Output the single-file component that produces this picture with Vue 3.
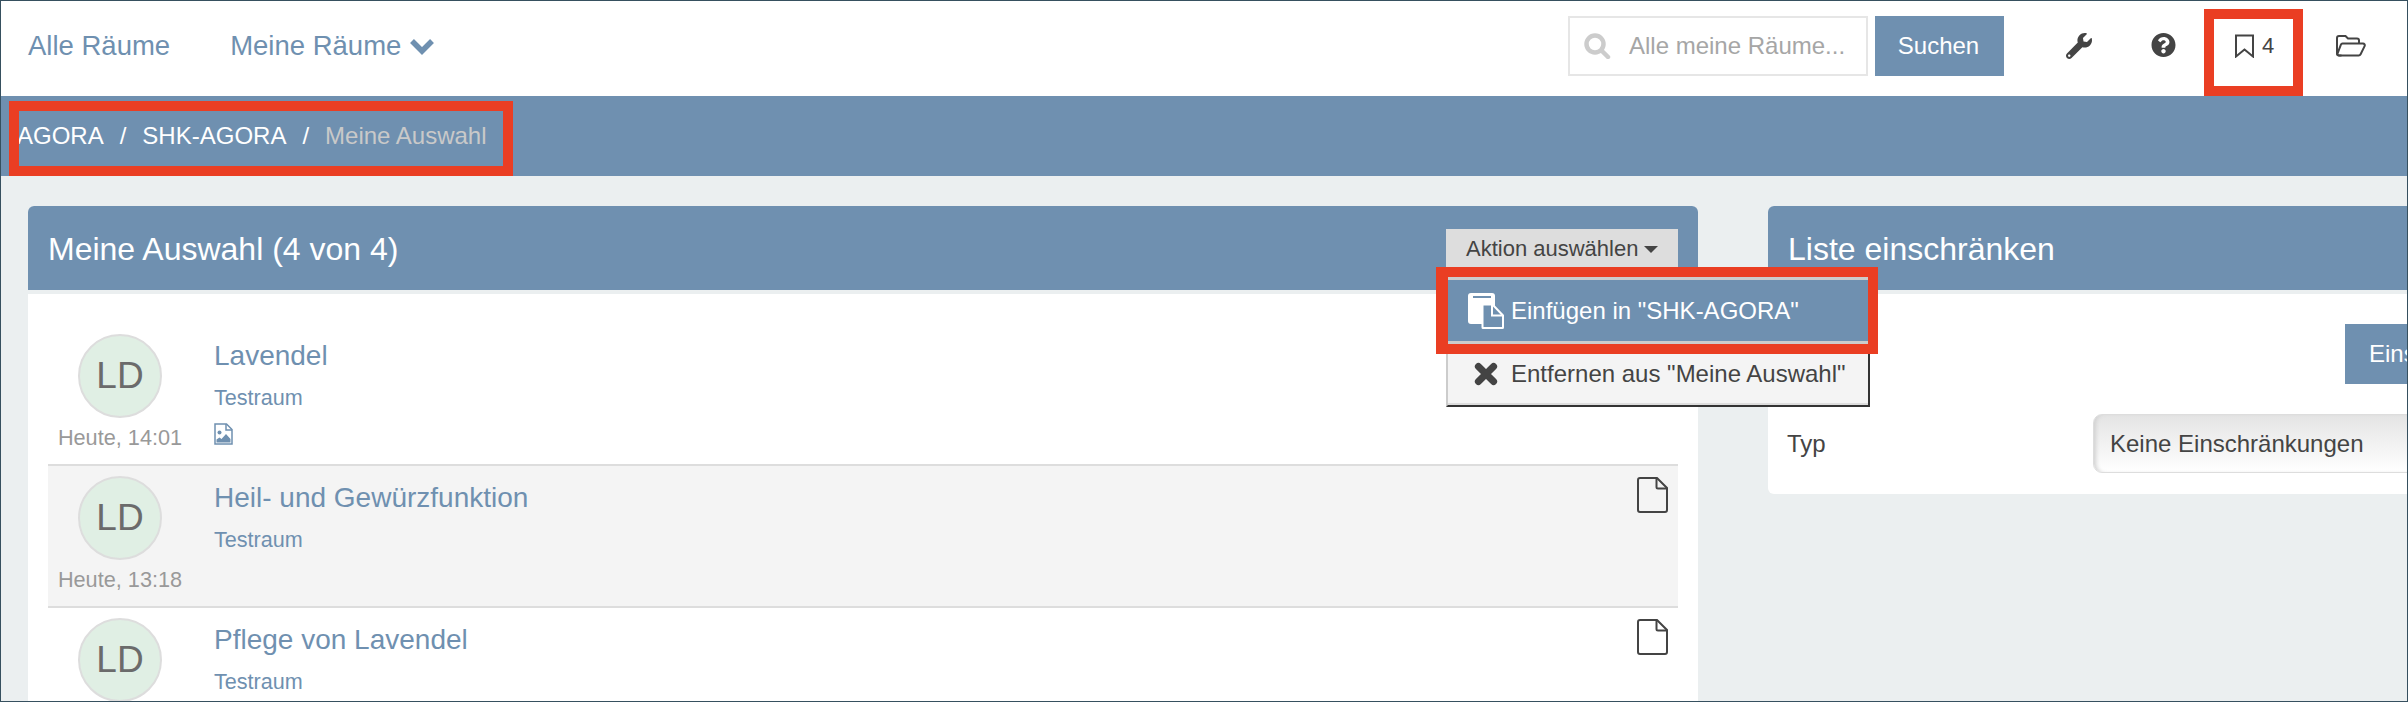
<template>
  <div class="page">
    <!-- Kopfzeile -->
    <header class="topbar">
      <nav class="main-nav">
        <a class="nav-link">Alle Räume</a>
        <a class="nav-link nav-drop">
          Meine Räume
          <svg class="chevron" viewBox="0 0 28 18"><polyline points="4,4 14,14 24,4" /></svg>
        </a>
      </nav>
      <div class="tools">
        <label class="search">
          <svg class="search-icon" viewBox="0 0 27 26">
            <circle cx="11" cy="11" r="8.500" />
            <line x1="17.500" y1="17.500" x2="24" y2="24" />
          </svg>
          <input type="text" placeholder="Alle meine Räume...">
        </label>
        <button class="search-btn">Suchen</button>
        <div class="tool tool-wrench">
          <svg class="wrench" viewBox="0 0 512 512"><path d="M507.73 109.1c-2.24-9.03-13.54-12.09-20.12-5.51l-74.36 74.36-67.88-11.31-11.31-67.88 74.36-74.36c6.62-6.62 3.43-17.9-5.66-20.16-47.38-11.74-99.55.91-136.58 37.93-39.64 39.64-50.55 97.1-34.05 147.2L18.74 402.76c-24.99 24.99-24.99 65.51 0 90.5 24.99 24.99 65.51 24.99 90.5 0l213.21-213.21c50.12 16.71 107.47 5.68 147.37-34.22 37.07-37.07 49.7-89.32 37.91-136.73zM64 472c-13.25 0-24-10.75-24-24 0-13.26 10.75-24 24-24s24 10.74 24 24c0 13.25-10.75 24-24 24z" /></svg>
        </div>
        <div class="tool tool-help">
          <svg class="help" viewBox="8 8 496 496"><path d="M504 256c0 136.997-111.043 248-248 248S8 392.997 8 256C8 119.083 119.043 8 256 8s248 111.083 248 248zM262.655 90c-54.497 0-89.255 22.957-116.549 63.758-3.536 5.286-2.353 12.415 2.715 16.258l34.699 26.31c5.205 3.947 12.621 3.008 16.665-2.122 17.864-22.658 30.113-35.797 57.303-35.797 20.429 0 45.698 13.148 45.698 32.958 0 14.976-12.363 22.667-32.534 33.976C247.128 238.528 216 254.941 216 296v4c0 6.627 5.373 12 12 12h56c6.627 0 12-5.373 12-12v-1.333c0-28.462 83.186-29.647 83.186-106.667 0-58.002-60.165-102-116.531-102zM256 338c-25.365 0-46 20.635-46 46 0 25.364 20.635 46 46 46s46-20.636 46-46c0-25.365-20.635-46-46-46z" /></svg>
        </div>
        <div class="tool tool-mark">
          <svg class="bookmark" viewBox="0 0 21 24"><path d="M2 1.500h17v21l-8.500-7-8.500 7z" /></svg>
          <span class="mark-count">4</span>
        </div>
        <div class="tool tool-folder">
          <svg class="folder" viewBox="0 0 30 22">
            <path d="M5.500 20.500H3a2 2 0 0 1-2-2V3a2 2 0 0 1 2-2h6.500l2.500 2.500h9a2 2 0 0 1 2 2V8.500" />
            <path d="M6.500 8.500h20.500a1.800 1.800 0 0 1 1.600 2.600l-4 8.200a2.200 2.200 0 0 1-2 1.200H3a1.500 1.500 0 0 1-1.400-2.200l3.300-8.700a1.800 1.800 0 0 1 1.600-1.100z" />
          </svg>
        </div>
      </div>
    </header>

    <!-- Pfad -->
    <div class="crumbs">
      <a>AGORA</a>
      <span>/</span>
      <a>SHK-AGORA</a>
      <span>/</span>
      <span class="crumb-current">Meine Auswahl</span>
    </div>

    <main class="content">
      <section class="card card-list">
        <div class="card-head">
          <h2>Meine Auswahl (4 von 4)</h2>
          <div class="action-wrap">
            <button class="action-btn">Aktion auswählen <i class="caret"></i></button>
            <div class="action-menu">
              <div class="menu-item active">
                <span class="menu-icon">
                  <svg class="paste" viewBox="0 0 36 36">
                    <path class="paste-back" d="M3 0h21a3 3 0 0 1 3 3v28H3a3 3 0 0 1-3-3V3a3 3 0 0 1 3-3z" />
                    <rect class="paste-notch" x="5" y="3" width="18" height="2" />
                    <path class="paste-sheet" d="M15 11.500h9.500l10.500 11v12a.500.500 0 0 1-.500.500H15a.500.500 0 0 1-.500-.500V12a.500.500 0 0 1 .500-.500z" />
                    <path class="paste-fold" d="M24 12v10.500h10.500" />
                  </svg>
                </span>
                Einfügen in "SHK-AGORA"
              </div>
              <div class="menu-item">
                <span class="menu-icon">
                  <svg class="times" viewBox="0 0 24 24"><path d="M5 5l14 14M19 5L5 19" /></svg>
                </span>
                Entfernen aus "Meine Auswahl"
              </div>
            </div>
          </div>
        </div>
        <div class="card-body list-body">
          <article v-for="(entry, index) in entries" :key="index" class="entry" :class="{ striped: index === 1 }">
            <div class="entry-left">
              <div class="avatar">LD</div>
              <div v-if="entry.time" class="entry-time">{{ entry.time }}</div>
            </div>
            <div class="entry-main">
              <a class="entry-title">{{ entry.title }}</a>
              <a class="entry-room">Testraum</a>
              <svg v-if="entry.image" class="file-image" viewBox="0 0 19 22">
                <path class="fi-line" d="M1 1h11.500l5.500 5.500V21H1z" />
                <path class="fi-line" d="M12 1v6h6" />
                <circle cx="5.500" cy="9.500" r="2" />
                <path d="M2.500 19.500v-3l3-2 2 1.500 4.500-5 4.500 5v3.500z" />
              </svg>
            </div>
            <svg class="file-icon" viewBox="0 0 31 36">
              <path d="M3 1h17l10 10v22a2 2 0 0 1-2 2H3a2 2 0 0 1-2-2V3a2 2 0 0 1 2-2z" />
              <path d="M19.500 1v9a1.500 1.500 0 0 0 1.500 1.500h9" />
            </svg>
          </article>
        </div>
      </section>

      <section class="card card-filter">
        <div class="card-head">
          <h2>Liste einschränken</h2>
        </div>
        <div class="card-body filter-body">
          <div class="filter-action">
            <button class="apply-btn">Einschränken</button>
          </div>
          <div class="filter-row">
            <span class="filter-label">Typ</span>
            <div class="filter-select">Keine Einschränkungen</div>
          </div>
        </div>
      </section>
    </main>

    <!-- rote Markierungen im Screenshot -->
    <div class="mark mark-crumbs"></div>
    <div class="mark mark-bookmark"></div>
    <div class="mark mark-menu"></div>
  </div>
</template>

<script setup>
const entries = [
  { title: 'Lavendel', time: 'Heute, 14:01', image: true },
  { title: 'Heil- und Gewürzfunktion', time: 'Heute, 13:18', image: false },
  { title: 'Pflege von Lavendel', time: '', image: false }
]
</script>

<style>
html,
body {
  margin: 0;
  overflow: hidden;
}
</style>

<style scoped>
.page {
  position: relative;
  box-sizing: border-box;
  width: 2408px;
  height: 702px;
  overflow: hidden;
  border: 1px solid #36505f;
  background-color: #ebeff0;
  font-family: "Liberation Sans", Arial, sans-serif;
  font-size: 24px;
  color: #444;
}

.topbar {
  display: flex;
  justify-content: space-between;
  box-sizing: border-box;
  height: 95px;
  padding: 15px 0 0 27px;
  background-color: #fff;
}

.main-nav {
  display: flex;
  gap: 60px;
  height: 60px;
  align-items: center;
}

.nav-link {
  display: flex;
  align-items: center;
  gap: 7px;
  font-size: 27.500px;
  color: #6f90b0;
}

.chevron {
  width: 28px;
  height: 18px;
  fill: none;
  stroke: #6f90b0;
  stroke-width: 5.500px;
}

.tools {
  display: flex;
  height: 60px;
  padding-right: 8px;
}

.search {
  display: flex;
  align-items: center;
  box-sizing: border-box;
  width: 300px;
  height: 60px;
  padding-left: 14px;
  border: 2px solid #e6e6e6;
}

.search-icon {
  flex: none;
  width: 27px;
  height: 26px;
  fill: none;
  stroke: #ccc;
  stroke-width: 4.500px;
  stroke-linecap: round;
}

.search input {
  flex: 1;
  min-width: 0;
  margin-left: 18px;
  padding: 0;
  border: none;
  outline: none;
  background: none;
  font-family: inherit;
  font-size: 24px;
  color: #444;
}

.search input::placeholder {
  color: #a6a6a6;
  opacity: 1;
}

.search-btn {
  width: 129px;
  height: 60px;
  margin-left: 7px;
  padding: 0 2px 0 0;
  border: none;
  background-color: #6f90b0;
  font-family: inherit;
  font-size: 24px;
  color: #fff;
}

.tool {
  display: flex;
  align-items: center;
  justify-content: center;
  height: 60px;
  fill: #444;
}

.tool-wrench {
  width: 84px;
  margin-left: 33px;
}

.wrench {
  width: 28px;
  height: 26px;
}

.tool-help {
  width: 84px;
}

.help {
  width: 25px;
  height: 24px;
  margin-top: -3px;
}

.tool-mark {
  width: 98px;
  gap: 7px;
}

.bookmark {
  width: 21px;
  height: 24px;
  fill: none;
  stroke: #444;
  stroke-width: 2px;
}

.mark-count {
  font-size: 22px;
}

.tool-folder {
  width: 96px;
}

.folder {
  width: 30px;
  height: 22px;
  fill: none;
  stroke: #444;
  stroke-width: 2px;
}

.crumbs {
  display: flex;
  align-items: center;
  gap: 16px;
  box-sizing: border-box;
  height: 80px;
  padding-left: 16px;
  background-color: #6f90b0;
  color: #fff;
}

.crumb-current {
  color: #c9c9c9;
}

.content {
  display: flex;
  align-items: flex-start;
  gap: 70px;
  padding: 30px 0 0 27px;
}

.card {
  flex: none;
  border-radius: 6px;
  background-color: #fff;
}

.card-list {
  width: 1670px;
  height: 600px;
}

.card-filter {
  width: 700px;
  height: 288px;
}

.card-head {
  display: flex;
  align-items: flex-start;
  justify-content: space-between;
  box-sizing: border-box;
  height: 88px;
  padding: 23px 20px 0 20px;
  border-bottom: 4px solid #ebeff0;
  border-radius: 6px 6px 0 0;
  background-color: #6f90b0;
}

.card-head h2 {
  margin: -1px 0 0;
  font-size: 32px;
  font-weight: 400;
  line-height: 42px;
  color: #fff;
}

.action-wrap {
  position: relative;
}

.action-btn {
  display: flex;
  align-items: center;
  gap: 6px;
  box-sizing: border-box;
  width: 232px;
  height: 60px;
  padding: 0 0 20px 20px;
  border: none;
  background-color: #ddd;
  font-family: inherit;
  font-size: 22px;
  color: #444;
}

.caret {
  width: 0;
  height: 0;
  border-top: 7px solid #444;
  border-left: 7px solid transparent;
  border-right: 7px solid transparent;
}

.action-menu {
  position: absolute;
  top: 48px;
  left: 0;
  z-index: 5;
  box-sizing: border-box;
  width: 424px;
  background-color: #f4f4f4;
  border-left: 2px solid #ccc;
  border-right: 2px solid #333;
  border-bottom: 2px solid #333;
}

.menu-item {
  display: flex;
  align-items: center;
  box-sizing: border-box;
  height: 61px;
  border-bottom: 2px solid #ddd;
  color: #444;
}

.menu-item.active {
  height: 67px;
  border-top: 3px solid #ccc;
  border-bottom: 3px solid #ccc;
  background-color: #6f90b0;
  color: #fff;
}

.menu-icon {
  display: flex;
  justify-content: center;
  width: 36px;
  margin: 0 7px 0 20px;
}

.paste {
  width: 36px;
  height: 36px;
}

.paste-back {
  fill: #fff;
}

.paste-notch {
  fill: #6f90b0;
}

.paste-sheet {
  fill: #6f90b0;
  stroke: #fff;
  stroke-width: 2px;
}

.paste-fold {
  fill: none;
  stroke: #fff;
  stroke-width: 2px;
}

.times {
  width: 26px;
  height: 26px;
  fill: none;
  stroke: #444;
  stroke-width: 6.500px;
  stroke-linecap: round;
}

.list-body {
  padding: 30px 20px 0;
}

.entry {
  display: flex;
  box-sizing: border-box;
  height: 142px;
  border-bottom: 2px solid #ddd;
}

.entry.striped {
  background-color: #f4f4f4;
}

.entry-left {
  display: flex;
  flex: none;
  flex-direction: column;
  align-items: center;
  width: 144px;
  padding-top: 10px;
}

.avatar {
  display: flex;
  align-items: center;
  justify-content: center;
  box-sizing: border-box;
  flex: none;
  width: 84px;
  height: 84px;
  border: 2px solid #ddd;
  border-radius: 50%;
  background-color: #e0efe4;
  font-size: 37px;
  color: #6b6b6b;
}

.entry-time {
  margin-top: 5px;
  font-size: 21.700px;
  line-height: 30px;
  color: #999;
}

.entry-main {
  display: flex;
  flex: 1;
  flex-direction: column;
  align-items: flex-start;
  padding: 15px 0 0 22px;
}

.entry-title {
  font-size: 28px;
  line-height: 34px;
  color: #6f90b0;
}

.entry-room {
  margin-top: 10px;
  font-size: 21.600px;
  line-height: 30px;
  color: #6f90b0;
}

.file-image {
  width: 19px;
  height: 22px;
  margin-top: 10px;
  fill: #6f90b0;
}

.fi-line {
  fill: none;
  stroke: #6f90b0;
  stroke-width: 1.500px;
}

.file-icon {
  flex: none;
  width: 31px;
  height: 36px;
  margin: 11px 10px 0 0;
  fill: none;
  stroke: #444;
  stroke-width: 2px;
}

.card-filter .card-body {
  padding: 30px 19px 0;
}

.filter-action {
  display: flex;
  padding-left: 558px;
}

.apply-btn {
  flex: none;
  width: 180px;
  height: 60px;
  padding: 0 0 0 24px;
  border: none;
  background-color: #6f90b0;
  font-family: inherit;
  font-size: 24px;
  text-align: left;
  color: #fff;
}

.filter-row {
  display: flex;
  align-items: center;
  margin-top: 30px;
}

.filter-label {
  flex: none;
  width: 306px;
}

.filter-select {
  display: flex;
  align-items: center;
  flex: none;
  box-sizing: border-box;
  width: 420px;
  height: 59px;
  padding-left: 16px;
  border: 1px solid #ddd;
  border-radius: 9px 0 0 9px;
  background: linear-gradient(#e4e4e4, #fff);
  box-shadow: inset 4px 0 4px -2px #d0d0d0;
  color: #444;
}

.mark {
  position: absolute;
  z-index: 10;
  box-sizing: border-box;
  border: 10px solid #ea3e23;
}

.mark-crumbs {
  top: 100px;
  left: 8px;
  width: 504px;
  height: 75px;
}

.mark-bookmark {
  top: 8px;
  left: 2203px;
  width: 99px;
  height: 87px;
}

.mark-menu {
  top: 266px;
  left: 1435px;
  width: 442px;
  height: 87px;
  border-left-width: 12px;
}
</style>
